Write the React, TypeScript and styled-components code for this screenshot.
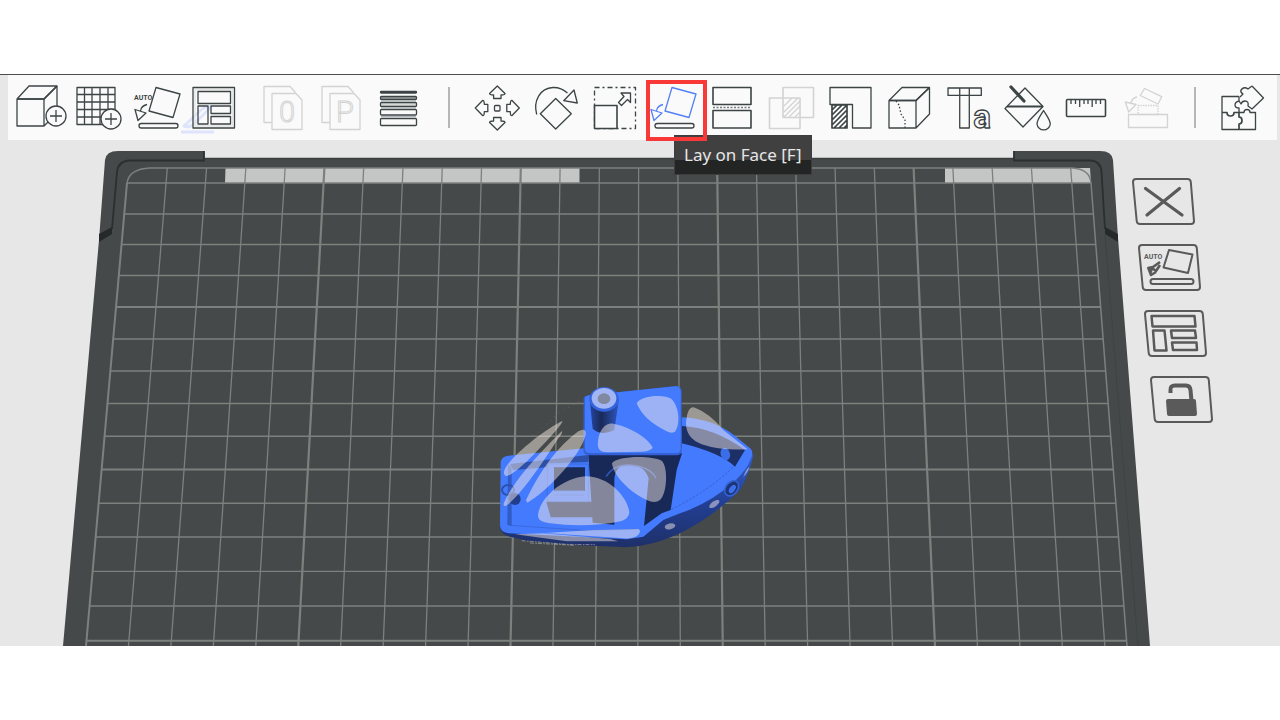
import React from "react";
import styled, { createGlobalStyle } from "styled-components";

const GlobalStyle = createGlobalStyle`
  *, *::before, *::after { box-sizing: border-box; }
  body { margin: 0; background: #ffffff; font-family: "Noto Sans", sans-serif; }
`;

const Page = styled.div`
  padding: 74px 0;
  background: #ffffff;
`;

const Workspace = styled.main`
  border-top: 1px solid #4a4e4f;
  background: #e7e7e7;
`;

const Toolbar = styled.div`
  position: relative;
  z-index: 1;
  display: flex;
  height: 65px;
  margin: 0 3px 0 8px;
  padding-left: 4px;
  background: #fafafa;
`;

const Group = styled.div`
  display: flex;
  flex: none;
`;

const LeadingGroup = styled(Group)`
  padding-right: 1px;
  gap: 10px;
`;

const ToolSlot = styled.div`
  position: relative;
  flex: none;
`;

const ToolButton = styled.button<{ $wide?: boolean }>`
  display: flex;
  flex: none;
  width: ${(p) => (p.$wide ? 59 : 58)}px;
  height: 65px;
  padding: 9px 5px;
  border: 0;
  background: none;
  color: #3c4445;
  cursor: pointer;

  &:disabled {
    color: #d3d3d3;
    cursor: default;
  }
`;

const SelectionFrame = styled.span`
  position: absolute;
  inset: 5px -4px -1px 2px;
  border: 4px solid #f93838;
  pointer-events: none;
`;

const Tooltip = styled.span`
  position: absolute;
  top: 60px;
  left: 30px;
  height: 40px;
  padding: 0 9px;
  border: 1px solid #3b3d3e;
  background: linear-gradient(#404040 0 24px, #232424 24px);
  color: #e6e6e6;
  font-size: 17px;
  line-height: 38px;
  white-space: nowrap;
`;

const Divider = styled.span`
  flex: none;
  width: 2px;
  height: 41px;
  margin: 12px 17px 0 19px;
  background: #b3b7b7;
`;

const IconSvg = styled.svg`
  flex: none;
  width: 48px;
  height: 48px;
  overflow: visible;
  fill: none;
  stroke: currentColor;
  stroke-width: 1.3;
  stroke-linejoin: round;
`;

const Scene = styled.section`
  display: grid;
  overflow: hidden;
`;

const BedSvg = styled.svg`
  grid-area: 1 / 1;
  display: block;
  width: 100%;
`;

const PlateActions = styled.div`
  grid-area: 1 / 1;
  justify-self: end;
  display: flex;
  flex-direction: column;
  gap: 18px;
  width: 82px;
  margin: 38px 66px 0 0;
`;

const PlateButton = styled.button<{ $step: number }>`
  width: 64px;
  height: 48px;
  margin-left: ${(p) => p.$step * 6}px;
  padding: 0;
  border: 0;
  background: none;
  color: #5a5a5a;
  cursor: pointer;
`;

const PlateSvg = styled.svg`
  display: block;
  width: 64px;
  height: 48px;
  overflow: visible;
  fill: none;
  stroke: currentColor;
  stroke-width: 2;
  stroke-linejoin: round;
`;

const IconText = styled.text`
  fill: currentColor;
  stroke: none;
  font-family: Roboto, sans-serif;
  font-weight: 700;
  font-size: 7px;
`;

const SheetLetter = styled.text`
  fill: #fafafa;
  stroke: currentColor;
  stroke-width: 1;
  font-family: Roboto, sans-serif;
  font-weight: 300;
  font-size: 29px;
`;

const OutlineLetters = styled.text`
  fill: #fafafa;
  stroke: currentColor;
  stroke-width: 1.3;
  font-family: Roboto, sans-serif;
  font-weight: 900;
  font-size: 56px;
`;

const SmallLetter = styled.tspan`
  font-size: 33px;
  font-weight: 700;
`;

const Icon = ({ children }: { children: React.ReactNode }) => (
  <IconSvg viewBox="0 0 48 48" aria-hidden="true">{children}</IconSvg>
);

const Plus = ({ x, y }: { x: number; y: number }) => (
  <g>
    <circle cx={x} cy={y} r="10" fill="#fafafa" />
    <path d={`M${x - 6} ${y}h12M${x} ${y - 6}v12`} />
  </g>
);

const AddCube = () => (
  <Icon>
    <path d="M0 15H27V42H0ZM0 15L12 2H40L27 15M40 2V24M27 42L32 37" />
    <path d="M0 15H27L40 2" strokeWidth="1.6" />
    <Plus x={39} y={32} />
  </Icon>
);

const AddPlate = () => (
  <Icon>
    <path d="M2 3.500H40V40.500H2ZM9.500 3.500V40.500M17 3.500V40.500M25 3.500V40.500M33 3.500V40.500M2 10.500H40M2 18H40M2 25.500H40M2 33H40" />
    <Plus x={36} y={35} />
  </Icon>
);

const LayShape = () => (
  <g>
    <path d="M23 3.500L47 10L40 33.500L16 27Z" />
    <path d="M14 20.500Q8 22 7.500 27M2 25.500L13 29L5 36.500Z" />
  </g>
);

const AutoOrient = () => (
  <Icon>
    <LayShape />
    <rect x="6" y="39.500" width="39" height="4.500" rx="2.200" />
    <IconText x="1" y="16">AUTO</IconText>
  </Icon>
);

const LayOnFace = () => (
  <Icon>
    <g stroke="#5480f5"><LayShape /></g>
    <rect x="6" y="39.500" width="39" height="4.500" rx="2.200" />
  </Icon>
);

const Arrange = () => (
  <Icon>
    <path d="M-7 42L11 25Q16 22 20 23L3 40Q-2 44-7 42ZM-10 48H23" stroke="#dde4fc" strokeWidth="3" />
    <path d="M4 5.500H41.500V42H4Z" stroke="#e4e6e6" />
    <path d="M2 3.500H43.500V44H2ZM7 7.500H39.500V19.500H7ZM7 22H17V40H7ZM20 22H39.500V29.500H20ZM20 32.500H39.500V40H20Z" />
  </Icon>
);

const Sheets = ({ letter }: { letter: string }) => (
  <Icon>
    <path d="M13 38.500H5V2.500H31L36 8V10M13 9.500H37L43 16V45.500H13Z" />
    <SheetLetter x="28" y="38" textAnchor="middle">{letter}</SheetLetter>
  </Icon>
);

const LayerHeight = () => (
  <Icon>
    <rect x="5.500" y="7.500" width="36" height="1.500" rx=".7" />
    <rect x="5.500" y="12.500" width="36" height="3" rx="1" fill="#9da1a1" />
    <rect x="5.500" y="18.500" width="36" height="4" rx="1" fill="#d5d7d7" />
    <rect x="5.500" y="25.500" width="36" height="5.500" rx="1" />
    <rect x="5.500" y="34.500" width="36" height="7" rx="1" />
    <path d="M6 17H41M6 24H41M6 32.700H41" stroke="#b3b6b6" />
  </Icon>
);

const Move = () => (
  <Icon>
    <rect x="22.500" y="21.500" width="5.500" height="5.500" rx="1" />
    {[0, 90, 180, 270].map((turn) => (
      <path key={turn} transform={`rotate(${turn} 25.300 24)`} d="M25.300 2L33 9.500Q33 11 29 11V14.500H21.600V11Q17.600 11 17.600 9.500Z" />
    ))}
  </Icon>
);

const Rotate = () => (
  <Icon>
    <path d="M24.700 14.500L40.300 29.700L24.700 45L9.300 29.700Z" />
    <path d="M5.700 30.500C2 17 9 4 22 3.500C28 3.300 32 5 36.500 9M43 6L46.300 19L32.700 16.700Z" />
  </Icon>
);

const Scale = () => (
  <Icon>
    <rect x="4.500" y="3.500" width="41" height="41" strokeDasharray="5 3 2 3" />
    <rect x="4.500" y="21.500" width="22.500" height="23" fill="#fafafa" strokeWidth="1.600" />
    <path d="M31 9H40.500V18.500L37.500 15.500L31.500 21.500L28.500 18.500L34 12.500Z" />
  </Icon>
);

const Cut = () => (
  <Icon>
    <path d="M5 3.500H43V20.500H5ZM5 26.500H43V44H5Z" strokeWidth="1.600" />
    <path d="M5 23.500H43" strokeDasharray="2 1.500" stroke="#777d7d" />
  </Icon>
);

const Boolean3d = () => (
  <Icon>
    <path d="M16 3.500H46.500V33.500H16ZM2.500 14H33V44.500H2.500Z" strokeWidth="1.600" />
    <path d="M17 22L25 14M17 28L31 14M17 33L33 17M22 33L33 22M28 33L33 28" />
  </Icon>
);

const Supports = () => (
  <Icon>
    <path d="M4 3.500H45V44H26.500V20.500H4Z" />
    <path d="M6 21H21V44H6ZM6 26L11 21M6 31L16 21M6 36L21 21M6 41L21 26M8 44L21 31M13 44L21 36M18 44L21 41" strokeWidth="1.700" />
  </Icon>
);

const Seam = () => (
  <Icon>
    <path d="M4 16.500H31V44H4ZM4 16.500L17 3.500H44.500L31 16.500M44.500 3.500V30L31 44" />
    <path d="M4 16.500H31L44.500 3.500" strokeWidth="1.700" />
    <path d="M11 17L14 21L16 30L20 36V44" strokeDasharray="1.500 2" />
  </Icon>
);

const TextTool = () => (
  <Icon>
    <OutlineLetters x="3" y="43.500">
      T<SmallLetter dx="-9">a</SmallLetter>
    </OutlineLetters>
  </Icon>
);

const Paint = () => (
  <Icon>
    <path d="M22 4L40 22.500L20 43L2 24.500Z" />
    <path d="M4 22.500H40" strokeWidth="2" />
    <path d="M8 3L21 17" strokeWidth="3.200" strokeLinecap="round" />
    <path d="M40.600 26.500C37 32 34 36 34 40A6.700 6.700 0 0 0 47.300 40C47.300 36 44 32 40.600 26.500Z" fill="#fafafa" />
  </Icon>
);

const Measure = () => (
  <Icon>
    <rect x="4.500" y="15.500" width="39" height="17" rx="1" strokeWidth="1.600" />
    <path d="M9 16V20M13.500 16V20M22 16V20M26 16V20M34 16V20M38.500 16V20" />
    <path d="M17.700 16V23M30.200 16V23" />
  </Icon>
);

const Assembly = () => (
  <Icon>
    <path d="M7.500 30.500H46.500V43.500H7.500ZM23.500 4.500L40.700 12.700L37 20L19.300 11.500Z" />
    <path d="M17 21.500H37V30.500H17Z" strokeDasharray="1.500 1" />
    <path d="M16 13Q11 14 10 19M4.300 18L15 20.500L7.700 28Z" />
  </Icon>
);

const Puzzle = () => (
  <Icon>
    <path d="M21 12.500H4V45.500H37.500V28.500H32Q32 25.500 29 25.500Q26 25.500 26 28.500H21" />
    <path d="M4 28.500H9Q9 32 12.500 32Q16 32 16 28.500H21V33Q24 33 24 36.500Q24 40 21 40V45.500" strokeWidth="1.700" />
    <path d="M21 12.500V17Q17 18 17 21Q17 24 21 24V28.500" />
    <path d="M34 2L45.500 14L34 25L30 22Q31 17 27 17Q24 17 23 20L21 17M34 2L30 5Q26 2 23 6Q22 8 25 10L22 13" />
  </Icon>
);

const leadingTools = [
  [
    { name: "Add object", Art: AddCube },
    { name: "Add plate", Art: AddPlate },
    { name: "Auto orient", Art: AutoOrient },
    { name: "Arrange", Art: Arrange },
  ],
  [
    { name: "Split to objects", Art: () => <Sheets letter="0" />, disabled: true },
    { name: "Split to parts", Art: () => <Sheets letter="P" />, disabled: true },
    { name: "Variable layer height", Art: LayerHeight },
  ],
];

const modelTools = [
  { name: "Move", Art: Move },
  { name: "Rotate", Art: Rotate },
  { name: "Scale", Art: Scale },
  { name: "Lay on Face", Art: LayOnFace, active: true },
  { name: "Cut", Art: Cut },
  { name: "Mesh boolean", Art: Boolean3d, disabled: true },
  { name: "Support painting", Art: Supports },
  { name: "Seam painting", Art: Seam },
  { name: "Text shape", Art: TextTool },
  { name: "Color painting", Art: Paint },
  { name: "Measure", Art: Measure },
  { name: "Assemble", Art: Assembly, disabled: true },
];

const PlateFrame = () => (
  <path d="M4 1H55.500Q58.500 1 58.800 4L62 43Q62 46 59 46H8Q5 46 4.700 43L1 4Q1 1 4 1Z" />
);

const plateActions = [
  { name: "Remove plate", art: <path d="M13.500 10.500L50 37M47.500 10.500L15 37" strokeWidth="3.200" strokeLinecap="round" /> },
  {
    name: "Auto orient plate",
    art: (
      <>
        <path d="M31 6L54.500 10.500L50 29L25.500 23.500Z" />
        <path d="M10 24L15 23L22 18M12 30L14 24L18 27L22 21M10 23L13 31L18 28" strokeWidth="2.600" />
        <rect x="12.500" y="35" width="43" height="5" rx="2.500" />
        <IconText x="6" y="15">AUTO</IconText>
      </>
    ),
  },
  { name: "Arrange plate", art: <path d="M7.500 6H50.500L51.500 16.500H8.500ZM9 20.500H20.500L22.500 40.500H10.500ZM27 20.500H51L52 28H28ZM28 32.500H52.500L53 40H29Z" strokeWidth="2.500" /> },
  {
    name: "Lock plate",
    art: (
      <>
        <path d="M16 25Q16 23 18 23H44Q46 23 46 25L47 38Q47 40 45 40H19Q17 40 17 38Z" fill="currentColor" stroke="none" />
        <path d="M20.500 17V14Q20 9.500 25 9.500H36Q40 9.500 40.500 14L41.500 25" strokeWidth="4" />
      </>
    ),
  },
];

const rows = [183, 214, 244.5, 275.5, 307, 339, 371, 403.5, 436.3, 469.5, 503.3, 537, 571.4, 606, 640.7];
const columns = Array.from({ length: 24 }, (_, i) => i + 1);

/* The bed narrows towards its far edge, so a row's ends depend on its depth. */
const leftAt = (y: number) => 128 - ((y - 168) / 478) * 42;
const rightAt = (y: number) => 1090 + ((y - 168) / 478) * 37;

const Bed = () => (
  <g>
    <path d="M105 160Q106 151 118 151H204V159H1014V151H1100Q1112 151 1113 160L1118 238L1150 646H63L99 240Z" fill="#454949" />
    <path d="M204 158.500H1014" stroke="#393e3e" strokeWidth="1.500" />
    <path d="M204 151V160.500H130Q118 161 117 172L112 229M1014 151V160.500H1090Q1101 161 1101.500 172L1105 229" fill="none" stroke="#2b2f2f" strokeWidth="1.800" />
    <path d="M112 227V234L99 242V234ZM1105 227V234L1118 242V234Z" fill="#252929" />
    <path d="M1105 235L1138 646" stroke="#3f4343" fill="none" />
    <path d="M225.500 168H579.500V183H225ZM945 168H1090L1091 183H945Z" fill="#c4c6c5" />
    <g stroke="#7d817e" fill="none">
      {columns.map((i) => (
        <path key={i} strokeWidth={i % 5 === 0 ? 2.2 : 1.3} d={`M${128 + 39.28 * i} 168L${86 + 42.45 * i} 646`} />
      ))}
      {rows.map((y, i) => (
        <path key={y} strokeWidth={i % 5 === 4 ? 2 : 1.4} d={`M${leftAt(y)} ${y}H${rightAt(y)}`} />
      ))}
      <path strokeWidth="2" d="M86 646L127 183" />
      <path strokeWidth="1.500" d="M127 183Q129 169 150 168H1072Q1090 169 1091 183L1127 646" />
    </g>
  </g>
);

const Boat = () => (
  <g transform="translate(480 370) scale(.33333)">
    <defs>
      <linearGradient id="hull" x1="0" y1="0" x2="0" y2="1">
        <stop offset="0" stopColor="#3560d0" />
        <stop offset=".55" stopColor="#233f93" />
        <stop offset="1" stopColor="#1e3069" />
      </linearGradient>
      <linearGradient id="funnel" x1="0" y1="0" x2="1" y2="0">
        <stop offset="0" stopColor="#2546a2" />
        <stop offset=".4" stopColor="#192a58" />
        <stop offset="1" stopColor="#2f57c2" />
      </linearGradient>
    </defs>
    <path d="M60 470Q62 495 90 500L140 512L300 526L440 532Q520 528 600 490Q700 440 780 360Q810 310 820 255L780 240L480 440Z" fill="url(#hull)" />
    <path d="M62 280Q62 262 80 258L310 235H605V142Q700 146 765 198L812 236Q822 248 812 268Q800 300 765 333Q690 400 600 430L550 450L490 500L440 508L85 490Q60 486 60 465Z" fill="#447afd" />
    <path d="M605 168Q700 172 795 240L765 290Q720 248 605 220Z" fill="#1c2f66" />
    <path d="M90 282L325 255V276L205 280L200 292L100 300Z" fill="#2c4fa8" />
    <path d="M84 284L95 292V468L82 465Z" fill="#315cc5" />
    <path d="M90 466L325 482L470 478" fill="none" stroke="#3460cf" strokeWidth="2" />
    <path d="M575 418Q690 360 758 292" fill="none" stroke="#2d55bd" strokeWidth="2" strokeDasharray="7 5" />
    <ellipse cx="736" cy="252" rx="14" ry="19" fill="#3b6de7" transform="rotate(-20 736 252)" />
    <path d="M222 292H315V363H222ZM199 395H340V442H212Z" fill="#192a57" />
    <path d="M202 282H325V395H202ZM224 362H312M224 375H312" fill="none" stroke="#3762cf" strokeWidth="2" />
    <path d="M325 250H606L590 300L572 420L545 430L492 468L506 325Q490 280 440 285Q405 286 403 330V464L338 458Z" fill="#182957" />
    <path d="M378 320Q400 285 445 285Q510 288 528 325" fill="none" stroke="#3157bd" strokeWidth="4" />
    <path d="M311 84Q312 78 326 76L588 48Q604 47 605 65V244Q603 256 590 256H326Q310 254 310 240Z" fill="#3462d6" />
    <path d="M315 84Q316 78 328 76L588 49Q601 49 602 65V238Q600 249 590 249H328Q315 248 315 238Z" fill="#447afd" />
    <path d="M329 88L338 176Q365 200 403 180L417 88Z" fill="url(#funnel)" />
    <ellipse cx="372" cy="88" rx="44" ry="37" fill="#3565de" />
    <ellipse cx="372" cy="85" rx="37" ry="31" fill="#a2b6f6" />
    <ellipse cx="372" cy="86" rx="19" ry="16" fill="#8288a0" />
    <ellipse cx="84" cy="360" rx="18" ry="15" fill="none" stroke="#2b50b0" strokeWidth="6" />
    <ellipse cx="105" cy="387" rx="17" ry="18" fill="#223e8b" />
    <ellipse cx="755" cy="355" rx="18" ry="25" transform="rotate(38 755 355)" fill="#1d3475" stroke="#3362d6" strokeWidth="5" />
    <ellipse cx="757" cy="357" rx="8" ry="14" transform="rotate(38 757 357)" fill="#3d70ec" />
    <g fill="#fff2ea" fillOpacity=".47">
      <path d="M470 100C485 75 555 72 575 88C598 110 602 165 585 185Q575 192 560 184Q490 150 470 100Z" />
      <path d="M354 230C352 190 370 158 400 161C450 170 505 205 518 232Q515 244 485 245L385 247Q358 248 354 230Z" />
      <path d="M618 160Q622 105 645 113Q690 130 730 180L803 238Q720 242 665 223Q618 205 618 160Z" />
      <path d="M396 280C410 258 510 255 545 272C565 290 562 370 540 390Q525 402 500 390C455 370 400 320 396 280Z" />
      <path d="M174 435C178 390 240 325 318 319C390 320 445 385 448 428Q446 445 425 453Q320 475 210 460Q172 455 174 435Z" />
      <path d="M72 305C78 270 190 180 247 153Q250 156 225 185C180 235 105 315 80 318Q71 317 72 305Z" />
      <path d="M72 398Q105 320 246 183Q249 188 235 205Q130 370 78 408Q68 410 72 398Z" />
      <path d="M138 390Q205 250 295 184Q320 170 317 195C300 260 200 365 142 398Z" />
      <path d="M195 489L340 480L475 477Q485 482 475 494Q460 507 430 505Z" />
      <path d="M105 493L190 490L390 507L415 514L260 514Z" />
      <ellipse cx="570" cy="469" rx="16" ry="9" transform="rotate(-12 570 469)" />
      <ellipse cx="703" cy="402" rx="18" ry="8" transform="rotate(-35 703 402)" />
      <path d="M790 320Q800 295 808 291Q804 308 790 320Z" />
    </g>
    <path d="M125 512L260 523L345 524M150 519L285 526" stroke="#a6a7ae" strokeWidth="2" strokeDasharray="12 4 5 3" fill="none" />
    <path d="M160 198L240 125L310 88" stroke="#6f7272" strokeWidth="2" strokeDasharray="3 14" fill="none" />
  </g>
);

export default function App() {
  return (
    <Page>
      <GlobalStyle />
      <Workspace>
        <Toolbar role="toolbar" aria-label="Model tools">
          <LeadingGroup>
            {leadingTools.map((group, i) => (
              <Group key={i}>
                {group.map(({ name, Art, ...rest }) => (
                  <ToolButton key={name} type="button" aria-label={name} disabled={"disabled" in rest}>
                    <Art />
                  </ToolButton>
                ))}
              </Group>
            ))}
          </LeadingGroup>
          <Divider />
          <Group>
            {modelTools.map(({ name, Art, active, disabled }) => (
              <ToolSlot key={name}>
                <ToolButton $wide type="button" aria-label={name} aria-pressed={active} disabled={disabled}>
                  <Art />
                </ToolButton>
                {active && (
                  <>
                    <Tooltip role="tooltip">Lay on Face [F]</Tooltip>
                    <SelectionFrame />
                  </>
                )}
              </ToolSlot>
            ))}
          </Group>
          <Divider />
          <ToolButton type="button" aria-label="Assembly view">
            <Puzzle />
          </ToolButton>
        </Toolbar>
        <Scene aria-label="Build plate">
          <BedSvg viewBox="0 140 1280 506" role="img" aria-label="Boat model on the build plate">
            <Bed />
            <Boat />
          </BedSvg>
          <PlateActions>
            {plateActions.map(({ name, art }, i) => (
              <PlateButton key={name} type="button" aria-label={name} $step={i}>
                <PlateSvg viewBox="0 0 64 48" aria-hidden="true">
                  <PlateFrame />
                  {art}
                </PlateSvg>
              </PlateButton>
            ))}
          </PlateActions>
        </Scene>
      </Workspace>
    </Page>
  );
}
